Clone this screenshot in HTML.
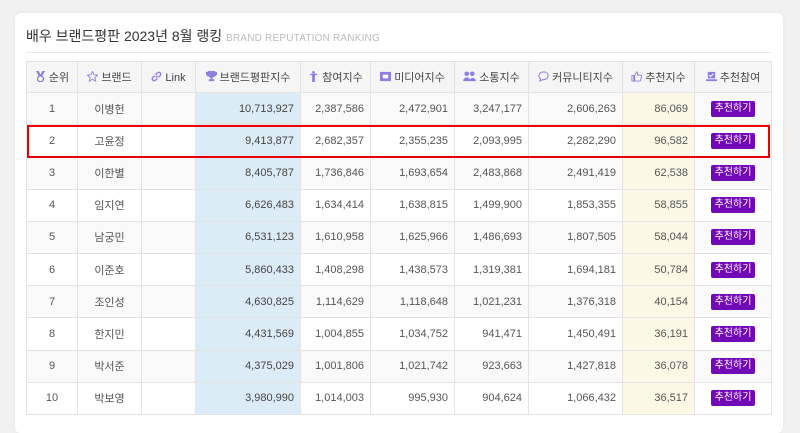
<!DOCTYPE html>
<html><head><meta charset="utf-8"><style>
body{margin:0;width:800px;height:414px;background:#f1f1f1;font-family:"Liberation Sans","Noto Sans CJK KR",sans-serif;overflow:hidden;position:relative}
.card{position:absolute;left:15px;top:13px;width:768px;height:420px;background:#fff;border-radius:6px;box-shadow:0 0 4px rgba(0,0,0,.05)}
.title{position:absolute;left:26px;top:26px;font-size:14px;color:#333;white-space:nowrap}
.title small{font-size:10px;color:#bbb;letter-spacing:.2px}
.hr{position:absolute;left:26px;top:52px;width:745px;height:1px;background:#e6e6e6}
table{position:absolute;left:26px;top:61px;border-collapse:collapse;table-layout:fixed;width:745px;font-size:11px;color:#555}
td,th{border:1px solid #e3e3e3;padding:0 6px;white-space:nowrap;overflow:hidden}
th{height:30px;background:#f5f5f5;font-weight:normal;color:#444;font-size:11px}
td{height:31.2px;text-align:right}
td.c{text-align:center}
tr.o td{background:#f9f9f9}
td.b{background:#dcecf6!important;color:#444}
td.y{background:#fcf8e5!important}
svg.i{width:11px;height:11px;vertical-align:-1px;margin-right:3px;fill:#8b80e0}
.btn{display:inline-block;background:#7209b7;color:#fff;font-size:10px;padding:1px 4px;border-radius:2px;line-height:14px}
.red{position:absolute;left:27px;top:125px;width:739px;height:29px;border:2px solid #e00}
</style></head><body>
<div class="card"></div>
<div class="title">배우 브랜드평판 2023년 8월 랭킹 <small>BRAND REPUTATION RANKING</small></div>
<div class="hr"></div>
<table>
<colgroup><col style="width:51px"><col style="width:64px"><col style="width:54px"><col style="width:105px"><col style="width:70px"><col style="width:84px"><col style="width:74px"><col style="width:94px"><col style="width:72px"><col style="width:77px"></colgroup>
<tr>
<th><svg class="i" viewBox="0 0 12 12"><path d="M1 0h3l2 4 2-4h3L8 5a4 4 0 1 1-4 0zM6 6a2.5 2.5 0 1 0 .01 0z"/></svg>순위</th>
<th><svg class="i" viewBox="0 0 12 12"><path d="M6 .5l1.6 3.6 3.9.4-2.9 2.6.8 3.9L6 9 2.6 11l.8-3.9L.5 4.5l3.9-.4z" fill="none" stroke="#8b80e0" stroke-width="1"/></svg>브랜드</th>
<th><svg class="i" viewBox="0 0 12 12"><path d="M5 7l2-2M4 5L2 7a2 2 0 0 0 3 3l2-2M8 7l2-2a2 2 0 0 0-3-3L5 4" fill="none" stroke="#8b80e0" stroke-width="1.5"/></svg>Link</th>
<th><svg class="i" viewBox="0 0 12 12"><path d="M2 0h8v1h2v2a3 3 0 0 1-3 3 3 3 0 0 1-2 1.5V9h2v2H3V9h2V7.5A3 3 0 0 1 3 6 3 3 0 0 1 0 3V1h2z"/></svg>브랜드평판지수</th>
<th><svg class="i" viewBox="0 0 12 12"><circle cx="6" cy="1.5" r="1.5"/><path d="M2 3h8v1.5H7.5V12h-3V4.5H2z"/></svg>참여지수</th>
<th><svg class="i" viewBox="0 0 12 12"><path d="M0 1h12v10H0z"/><path d="M3 4h6v4H3z" fill="#fff"/></svg>미디어지수</th>
<th><svg class="i" viewBox="0 0 14 12" style="width:13px"><circle cx="4" cy="3" r="2.5"/><circle cx="10" cy="3" r="2.5"/><path d="M0 11a4 4 0 0 1 8 0zM7 11a3.5 3.5 0 0 1 7 0z"/></svg>소통지수</th>
<th><svg class="i" viewBox="0 0 12 12"><path d="M6 1C3 1 1 3 1 5.5c0 1.5.8 2.5 1.8 3.2L2 11l3-1.6c.3.1.7.1 1 .1 3 0 5-2 5-4.5S9 1 6 1z" fill="none" stroke="#8b80e0" stroke-width="1.1"/></svg>커뮤니티지수</th>
<th><svg class="i" viewBox="0 0 12 12"><path d="M1 5h2v6H1zM4 5l2-4c1 0 1.5.7 1.3 1.8L7 4.5h3.5c.8 0 1.2.6 1 1.3l-1.2 4.5c-.2.5-.6.7-1 .7H4z" fill="none" stroke="#8b80e0" stroke-width="1"/></svg>추천지수</th>
<th><svg class="i" viewBox="0 0 12 12"><path d="M2 1h8v7H2z"/><path d="M3.5 4.5l1.5 1.5 3-3" fill="none" stroke="#fff" stroke-width="1.2"/><path d="M0 9h12v2H0z"/></svg>추천참여</th>
</tr>
<tr class="o"><td class="c">1</td><td class="c">이병헌</td><td></td><td class="b">10,713,927</td><td>2,387,586</td><td>2,472,901</td><td>3,247,177</td><td>2,606,263</td><td class="y">86,069</td><td class="c"><span class="btn">추천하기</span></td></tr>
<tr><td class="c">2</td><td class="c">고윤정</td><td></td><td class="b">9,413,877</td><td>2,682,357</td><td>2,355,235</td><td>2,093,995</td><td>2,282,290</td><td class="y">96,582</td><td class="c"><span class="btn">추천하기</span></td></tr>
<tr class="o"><td class="c">3</td><td class="c">이한별</td><td></td><td class="b">8,405,787</td><td>1,736,846</td><td>1,693,654</td><td>2,483,868</td><td>2,491,419</td><td class="y">62,538</td><td class="c"><span class="btn">추천하기</span></td></tr>
<tr><td class="c">4</td><td class="c">임지연</td><td></td><td class="b">6,626,483</td><td>1,634,414</td><td>1,638,815</td><td>1,499,900</td><td>1,853,355</td><td class="y">58,855</td><td class="c"><span class="btn">추천하기</span></td></tr>
<tr class="o"><td class="c">5</td><td class="c">남궁민</td><td></td><td class="b">6,531,123</td><td>1,610,958</td><td>1,625,966</td><td>1,486,693</td><td>1,807,505</td><td class="y">58,044</td><td class="c"><span class="btn">추천하기</span></td></tr>
<tr><td class="c">6</td><td class="c">이준호</td><td></td><td class="b">5,860,433</td><td>1,408,298</td><td>1,438,573</td><td>1,319,381</td><td>1,694,181</td><td class="y">50,784</td><td class="c"><span class="btn">추천하기</span></td></tr>
<tr class="o"><td class="c">7</td><td class="c">조인성</td><td></td><td class="b">4,630,825</td><td>1,114,629</td><td>1,118,648</td><td>1,021,231</td><td>1,376,318</td><td class="y">40,154</td><td class="c"><span class="btn">추천하기</span></td></tr>
<tr><td class="c">8</td><td class="c">한지민</td><td></td><td class="b">4,431,569</td><td>1,004,855</td><td>1,034,752</td><td>941,471</td><td>1,450,491</td><td class="y">36,191</td><td class="c"><span class="btn">추천하기</span></td></tr>
<tr class="o"><td class="c">9</td><td class="c">박서준</td><td></td><td class="b">4,375,029</td><td>1,001,806</td><td>1,021,742</td><td>923,663</td><td>1,427,818</td><td class="y">36,078</td><td class="c"><span class="btn">추천하기</span></td></tr>
<tr><td class="c">10</td><td class="c">박보영</td><td></td><td class="b">3,980,990</td><td>1,014,003</td><td>995,930</td><td>904,624</td><td>1,066,432</td><td class="y">36,517</td><td class="c"><span class="btn">추천하기</span></td></tr>
</table>
<div class="red"></div>
</body></html>
